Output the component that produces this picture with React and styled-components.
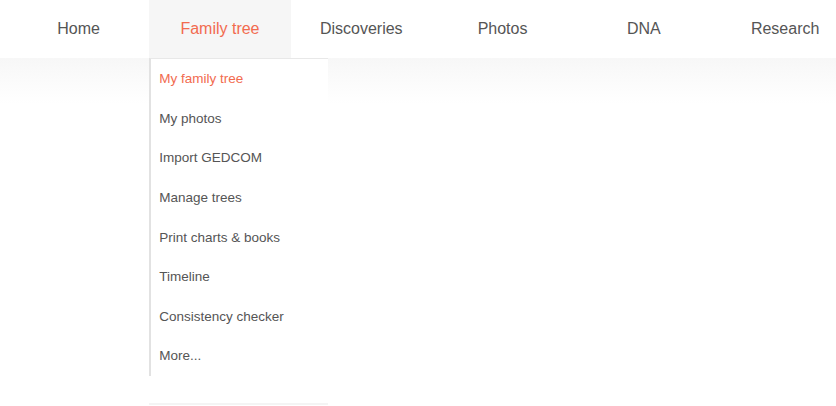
import React from 'react';
import styled, { createGlobalStyle } from 'styled-components';

const GlobalStyle = createGlobalStyle`
    html {
        overflow: hidden;
    }
    body {
        margin: 0;
        min-height: 406px;
        background: #fff;
        font-family: "Liberation Sans", Arial, sans-serif;
    }
`

const navItems = ['Home', 'Family tree', 'Discoveries', 'Photos', 'DNA', 'Research'];
const menuItems = [
    'My family tree',
    'My photos',
    'Import GEDCOM',
    'Manage trees',
    'Print charts & books',
    'Timeline',
    'Consistency checker',
    'More...',
];

const App = () => (
    <>
        <GlobalStyle />
        <HeaderStyle>
            <NavStyle>
                {navItems.map((item) => (
                    <NavItemStyle key={item} active={item === 'Family tree'}>
                        {item}
                        {item === 'Family tree' && (
                            <DropdownStyle>
                                {menuItems.map((sub, i) => (
                                    <MenuItemStyle key={sub} active={i === 0}>{sub}</MenuItemStyle>
                                ))}
                            </DropdownStyle>
                        )}
                    </NavItemStyle>
                ))}
            </NavStyle>
            <ShadeStyle />
        </HeaderStyle>
    </>
);

export const HeaderStyle = styled.header`
    width: 100%;
`

export const NavStyle = styled.nav`
    display: flex;
    height: 58px;
    padding-left: 8px;
    background: #fff;
    white-space: nowrap;
`

export const NavItemStyle = styled.div`
    position: relative;
    flex: 0 0 141.3px;
    display: flex;
    align-items: center;
    justify-content: center;
    font-size: 16px;
    color: ${({ active }) => (active ? '#f26b4f' : '#555')};
    background: ${({ active }) => (active ? '#f6f6f6' : 'transparent')};
`

export const DropdownStyle = styled.div`
    position: absolute;
    top: 58px;
    left: 0;
    width: 179px;
    display: flex;
    flex-direction: column;
    background: #fff;
    border-top: 1px solid #e8e8e8;
    border-left: 2px solid #e2e2e2;
    box-sizing: border-box;
    z-index: 2;

    &::after {
        content: '';
        position: absolute;
        left: -2px;
        right: 0;
        bottom: -29px;
        height: 2px;
        background: #f4f4f4;
    }
`

export const MenuItemStyle = styled.div`
    height: 39.6px;
    display: flex;
    align-items: center;
    padding-left: 8px;
    font-size: 13.5px;
    color: ${({ active }) => (active ? '#f26b4f' : '#555')};
`

export const ShadeStyle = styled.div`
    height: 46px;
    background: linear-gradient(to bottom, #f7f7f7, #fff);
`

export default App;
